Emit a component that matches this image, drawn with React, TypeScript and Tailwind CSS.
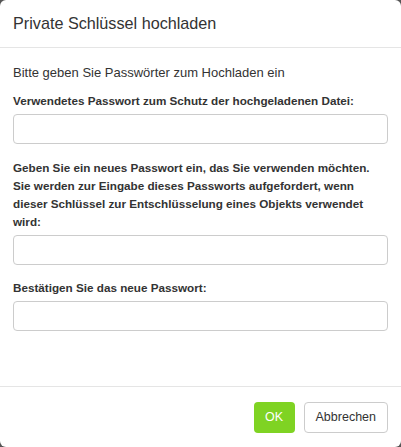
export default function App() {
  return (
    <div className="h-[447px] w-[401px] bg-[#555555] font-['Liberation_Sans',Arial,sans-serif] text-[#333333]">
      <div className="flex h-full w-full flex-col rounded-[6px] bg-white">
        <div className="flex h-[48px] items-center border-b border-[#e5e5e5] px-[13px]">
          <h4 className="text-[16.2px] leading-none">Private Schlüssel hochladen</h4>
        </div>

        <div className="flex flex-1 flex-col px-[13px] pt-[16px]">
          <p className="text-[13px] leading-[18px]">Bitte geben Sie Passwörter zum Hochladen ein</p>

          <label className="mt-[10px] block text-[11.7px] font-bold leading-[18px]">
            Verwendetes Passwort zum Schutz der hochgeladenen Datei:
          </label>
          <input
            type="password"
            className="mt-[4px] h-[30px] w-full rounded-[4px] border border-[#cccccc] px-2 text-[13px] outline-none"
          />

          <label className="mt-[15px] block text-[11.7px] font-bold leading-[18px]">
            Geben Sie ein neues Passwort ein, das Sie verwenden möchten. Sie werden zur Eingabe dieses
            Passworts aufgefordert, wenn dieser Schlüssel zur Entschlüsselung eines Objekts verwendet
            wird:
          </label>
          <input
            type="password"
            className="mt-[4px] h-[30px] w-full rounded-[4px] border border-[#cccccc] px-2 text-[13px] outline-none"
          />

          <label className="mt-[14px] block text-[11.7px] font-bold leading-[18px]">
            Bestätigen Sie das neue Passwort:
          </label>
          <input
            type="password"
            className="mt-[4px] h-[30px] w-full rounded-[4px] border border-[#cccccc] px-2 text-[13px] outline-none"
          />
        </div>

        <div className="flex h-[61px] items-center justify-end gap-[9px] border-t border-[#e5e5e5] px-[13px]">
          <button className="h-[31px] w-[41px] rounded-[4px] bg-[#7fd323] text-[12.5px] text-white">
            OK
          </button>
          <button className="h-[31px] rounded-[4px] border border-[#cccccc] bg-white px-[11px] text-[12.5px] text-[#333333]">
            Abbrechen
          </button>
        </div>
      </div>
    </div>
  );
}
